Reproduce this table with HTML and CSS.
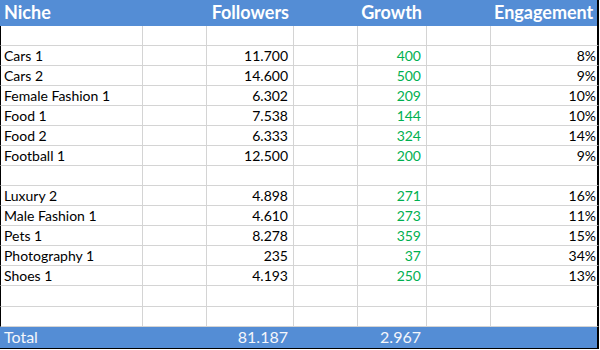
FILE: index.html
```html
<!DOCTYPE html>
<html>
<head>
<meta charset="utf-8">
<link rel="stylesheet" href="styles.css">
</head>
<body>
<div class="sheet">
  <div class="row head">
    <div class="c a">Niche</div><div class="c"></div><div class="c r">Followers</div><div class="c"></div><div class="c r">Growth</div><div class="c"></div><div class="c r g">Engagement</div>
  </div>
  <div class="row"><div class="c a"></div><div class="c"></div><div class="c"></div><div class="c"></div><div class="c"></div><div class="c"></div><div class="c g"></div></div>
  <div class="row"><div class="c a">Cars 1</div><div class="c"></div><div class="c r">11.700</div><div class="c"></div><div class="c r up">400</div><div class="c"></div><div class="c r g">8%</div></div>
  <div class="row"><div class="c a">Cars 2</div><div class="c"></div><div class="c r">14.600</div><div class="c"></div><div class="c r up">500</div><div class="c"></div><div class="c r g">9%</div></div>
  <div class="row"><div class="c a">Female Fashion 1</div><div class="c"></div><div class="c r">6.302</div><div class="c"></div><div class="c r up">209</div><div class="c"></div><div class="c r g">10%</div></div>
  <div class="row"><div class="c a">Food 1</div><div class="c"></div><div class="c r">7.538</div><div class="c"></div><div class="c r up">144</div><div class="c"></div><div class="c r g">10%</div></div>
  <div class="row"><div class="c a">Food 2</div><div class="c"></div><div class="c r">6.333</div><div class="c"></div><div class="c r up">324</div><div class="c"></div><div class="c r g">14%</div></div>
  <div class="row"><div class="c a">Football 1</div><div class="c"></div><div class="c r">12.500</div><div class="c"></div><div class="c r up">200</div><div class="c"></div><div class="c r g">9%</div></div>
  <div class="row"><div class="c a"></div><div class="c"></div><div class="c"></div><div class="c"></div><div class="c"></div><div class="c"></div><div class="c g"></div></div>
  <div class="row"><div class="c a">Luxury 2</div><div class="c"></div><div class="c r">4.898</div><div class="c"></div><div class="c r up">271</div><div class="c"></div><div class="c r g">16%</div></div>
  <div class="row"><div class="c a">Male Fashion 1</div><div class="c"></div><div class="c r">4.610</div><div class="c"></div><div class="c r up">273</div><div class="c"></div><div class="c r g">11%</div></div>
  <div class="row"><div class="c a">Pets 1</div><div class="c"></div><div class="c r">8.278</div><div class="c"></div><div class="c r up">359</div><div class="c"></div><div class="c r g">15%</div></div>
  <div class="row"><div class="c a">Photography 1</div><div class="c"></div><div class="c r">235</div><div class="c"></div><div class="c r up">37</div><div class="c"></div><div class="c r g">34%</div></div>
  <div class="row"><div class="c a">Shoes 1</div><div class="c"></div><div class="c r">4.193</div><div class="c"></div><div class="c r up">250</div><div class="c"></div><div class="c r g">13%</div></div>
  <div class="row tall"><div class="c a"></div><div class="c"></div><div class="c"></div><div class="c"></div><div class="c"></div><div class="c"></div><div class="c g"></div></div>
  <div class="row"><div class="c a"></div><div class="c"></div><div class="c"></div><div class="c"></div><div class="c"></div><div class="c"></div><div class="c g"></div></div>
  <div class="row total">
    <div class="c a">Total</div><div class="c"></div><div class="c r">81.187</div><div class="c"></div><div class="c r">2.967</div><div class="c"></div><div class="c r g"></div>
  </div>
</div>
</body>
</html>
```

FILE: styles.css
```css
html, body {
  margin: 0;
  padding: 0;
  background: #ffffff;
}

.sheet {
  width: 599px;
  font-family: "Lato", "Open Sans", sans-serif;
  font-size: 14px;
  color: #000000;
}

.row {
  display: grid;
  grid-template-columns: 143px 64px 87px 64px 69px 64px 108px;
  height: 20px;
}

.row.tall {
  height: 21px;
}

.c {
  box-sizing: border-box;
  border-right: 1px solid #d4d4d4;
  border-bottom: 1px solid #d4d4d4;
  line-height: 19px;
  white-space: nowrap;
  overflow: hidden;
  padding: 0 5px 0 3px;
}

.c.a {
  border-left: 1px solid #000000;
  padding-left: 3px;
}

.c.r {
  text-align: right;
}

.c.g {
  border-right: 2px solid #000000;
  padding-right: 1px;
}

.up {
  color: #00b050;
}

.head {
  height: 26px;
  background: #548dd5;
}

.head .c,
.total .c {
  border-bottom: none;
  border-right: none;
  border-left: none;
}

.head .c {
  color: #ffffff;
  font-weight: 700;
  font-size: 18px;
  line-height: 25px;
  padding-right: 5px;
}

.head .c.g,
.total .c.g {
  border-right: 2px solid #000000;
  padding-right: 5px;
}

.head .c.a,
.total .c.a {
  padding-left: 4px;
}

.total {
  height: 21px;
  background: #548dd5;
  border-bottom: 1px solid #000000;
}

.total .c {
  color: #f4f6fb;
  font-size: 16px;
  line-height: 20px;
  padding-right: 6px;
}
```
